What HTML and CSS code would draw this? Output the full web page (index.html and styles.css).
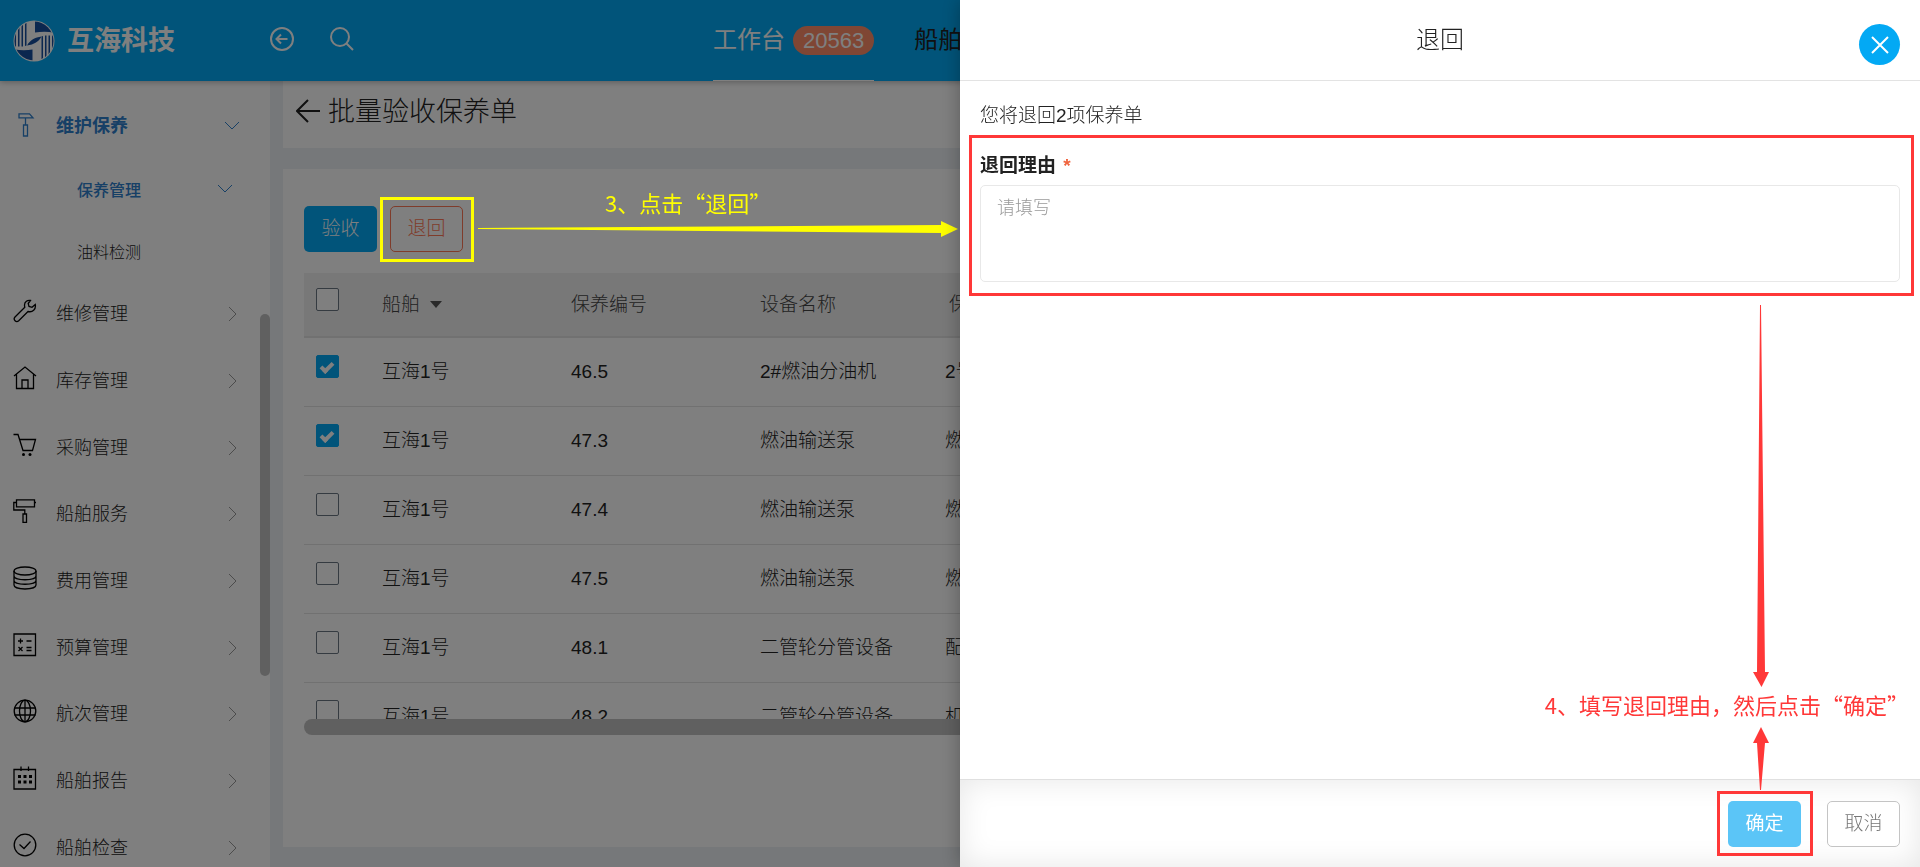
FILE: index.html
```html
<!DOCTYPE html>
<html lang="zh-CN">
<head>
<meta charset="utf-8">
<title>批量验收保养单</title>
<link rel="stylesheet" href="styles.css">
</head>
<body>
<div class="app">
  <header class="topbar">
    <a class="brand" href="#">
      <svg class="brand-logo" viewBox="0 0 42 42" aria-hidden="true">
        <defs><clipPath id="disc"><circle cx="21" cy="21" r="19.5"/></clipPath></defs>
        <circle cx="21" cy="21" r="20.5" fill="#fff"/>
        <g clip-path="url(#disc)">
          <path fill="#174f9f" d="M22 0h20v13C36 11.500 29 11.500 22 12.500z"/>
          <path fill="#174f9f" d="M0 29c7 1.500 13 1.500 19.500.5V42H0z"/>
          <path fill="#174f9f" d="M0 8l3-2v20.500H0zM5 8l1.500-2v20.500H5zM8.500 5l1.500-1v22.500H8.500zM12 3.500L13.500 2v23.500L12 26z"/>
          <path fill="#174f9f" d="M42 34l-3 2V15.500h3zM37 34l-1.500 2V15.500H37zM33.500 37l-1.500 1V15.500h1.500zM30 38.500L28.500 40V16.500l1.500-.5z"/>
          <path fill="#174f9f" d="M14 25.500C17 20 22 17.500 28.500 16.500C26 21.500 21 24.500 14 25.500z"/>
        </g>
      </svg>
      <span>互海科技</span>
    </a>
    <div class="tools">
      <button class="icon-btn" type="button" aria-label="返回">
        <svg width="24" height="24" viewBox="0 0 24 24"><circle cx="12" cy="12" r="11"/><path d="M17.500 12H7M11 7.500L6.500 12l4.500 4.500"/></svg>
      </button>
      <button class="icon-btn search" type="button" aria-label="搜索">
        <svg width="24" height="24" viewBox="0 0 24 24"><circle cx="10" cy="10" r="9"/><path d="M16.500 16.500L23 23"/></svg>
      </button>
    </div>
    <nav class="tabs">
      <a class="tab current" href="#">工作台 <span class="badge">20563</span></a>
      <a class="tab" href="#">船舶</a>
    </nav>
  </header>

  <div class="layout">
    <aside class="sidebar">
      <a class="menu-item open" href="#">
        <svg class="ic" viewBox="0 0 24 24"><path d="M6 .8h10.500l3.500 4h-4L14 4.800H6zM10.500 12h4v11h-4zM12.500 4.800V12"/></svg>
        <span>维护保养</span>
        <svg class="down" viewBox="0 0 16 9"><path d="M1 1l7 7 7-7"/></svg>
      </a>
      <a class="menu-item sub active" href="#">
        <span>保养管理</span>
        <svg class="down" viewBox="0 0 16 9"><path d="M1 1l7 7 7-7"/></svg>
      </a>
      <a class="menu-item sub" href="#"><span>油料检测</span></a>
      <div class="menu-list">
        <a class="menu-item" href="#">
          <svg class="ic" viewBox="0 0 24 24"><path d="M17.500 1.500c-3-.8-6 1.300-6 4.500 0 1.200.2 1.800.3 2.300L2 18c-2.300 2.600 1.200 6 3.700 3.700L15 12.500c4.500 1.200 8.200-2 7.300-7L19 8.300l-3-.8-.8-3z"/></svg>
          <span>维修管理</span><svg class="right" viewBox="0 0 9 16"><path d="M1 1l7 7-7 7"/></svg></a>
        <a class="menu-item" href="#">
          <svg class="ic" viewBox="0 0 24 24"><path d="M1 10L12 1l11 9M3.500 8.500V22.500h17V8.500M9 22.500v-8.500h6v8.500"/></svg>
          <span>库存管理</span><svg class="right" viewBox="0 0 9 16"><path d="M1 1l7 7-7 7"/></svg></a>
        <a class="menu-item" href="#">
          <svg class="ic" viewBox="0 0 24 24"><path d="M.5 1.500h4.500l5 16h10M6.500 6.500h16l-3 11"/><circle class="dot" cx="10.500" cy="21.500" r="1.500"/><circle class="dot" cx="17" cy="21.500" r="1.500"/></svg>
          <span>采购管理</span><svg class="right" viewBox="0 0 9 16"><path d="M1 1l7 7-7 7"/></svg></a>
        <a class="menu-item" href="#">
          <svg class="ic" viewBox="0 0 24 24"><path d="M3.500.8h18v7h-18zM3.500 3.500H.8V11h11v4M10 15h3.500v8.300H10zM21.500 3.500H23"/></svg>
          <span>船舶服务</span><svg class="right" viewBox="0 0 9 16"><path d="M1 1l7 7-7 7"/></svg></a>
        <a class="menu-item" href="#">
          <svg class="ic" viewBox="0 0 24 24"><ellipse cx="12" cy="5" rx="11" ry="4"/><path d="M1 5v14c0 5.300 22 5.300 22 0V5M1 10c0 5 22 5 22 0M1 14.500c0 5 22 5 22 0"/></svg>
          <span>费用管理</span><svg class="right" viewBox="0 0 9 16"><path d="M1 1l7 7-7 7"/></svg></a>
        <a class="menu-item" href="#">
          <svg class="ic" viewBox="0 0 24 24"><path d="M1 1h21.500v21.500H1zM5 8h5M7.500 5.500v5M13.500 8h5M5.500 14l4 4M9.500 14l-4 4M13.500 14.500h5M13.500 17.500h5"/></svg>
          <span>预算管理</span><svg class="right" viewBox="0 0 9 16"><path d="M1 1l7 7-7 7"/></svg></a>
        <a class="menu-item" href="#">
          <svg class="ic" viewBox="0 0 24 24"><circle cx="12" cy="12" r="10.800"/><ellipse cx="12" cy="12" rx="5.500" ry="10.800"/><path d="M12 1v22M1.500 9h21M1.500 16h21"/></svg>
          <span>航次管理</span><svg class="right" viewBox="0 0 9 16"><path d="M1 1l7 7-7 7"/></svg></a>
        <a class="menu-item" href="#">
          <svg class="ic" viewBox="0 0 24 24"><path d="M1 3.500h21.500V23H1zM8 .5V5M15.500.5V5"/><path class="dots" d="M5 10.500h3M10.500 10.500h3M16 10.500h3M5 16h3M10.500 16h3M16 16h3"/></svg>
          <span>船舶报告</span><svg class="right" viewBox="0 0 9 16"><path d="M1 1l7 7-7 7"/></svg></a>
        <a class="menu-item" href="#">
          <svg class="ic" viewBox="0 0 24 24"><circle cx="12" cy="12" r="10.800"/><path d="M6.500 11.500l4.500 4 6.500-7"/></svg>
          <span>船舶检查</span><svg class="right" viewBox="0 0 9 16"><path d="M1 1l7 7-7 7"/></svg></a>
      </div>
      <div class="side-scroll"></div>
    </aside>

    <main class="content">
      <div class="page-title">
        <svg width="24" height="24" viewBox="0 0 24 24"><path d="M24 12H1M12 1L1 12l11 11"/></svg>
        <h1>批量验收保养单</h1>
      </div>
      <section class="card">
        <div class="actions">
          <button class="btn primary" type="button">验收</button>
          <button class="btn warn" type="button">退回</button>
        </div>
        <div class="table-wrap">
          <table class="grid">
            <colgroup><col class="c-check"><col class="c"><col class="c"><col class="c"><col></colgroup>
            <thead><tr><th><input type="checkbox" aria-label="全选"></th><th>船舶 <i class="caret"></i></th><th>保养编号</th><th>设备名称</th><th>保</th></tr></thead>
            <tbody>
              <tr><td><input type="checkbox" aria-label="46.5" checked></td><td>互海1号</td><td>46.5</td><td>2#燃油分油机</td><td>2号</td></tr>
              <tr><td><input type="checkbox" aria-label="47.3" checked></td><td>互海1号</td><td>47.3</td><td>燃油输送泵</td><td>燃</td></tr>
              <tr><td><input type="checkbox" aria-label="47.4"></td><td>互海1号</td><td>47.4</td><td>燃油输送泵</td><td>燃</td></tr>
              <tr><td><input type="checkbox" aria-label="47.5"></td><td>互海1号</td><td>47.5</td><td>燃油输送泵</td><td>燃</td></tr>
              <tr><td><input type="checkbox" aria-label="48.1"></td><td>互海1号</td><td>48.1</td><td>二管轮分管设备</td><td>配</td></tr>
              <tr><td><input type="checkbox" aria-label="48.2"></td><td>互海1号</td><td>48.2</td><td>二管轮分管设备</td><td>机</td></tr>
            </tbody>
          </table>
          <div class="table-scroll"></div>
        </div>
      </section>
    </main>
  </div>
</div>

<div class="mask"></div>

<div class="note note-left">
  <div class="frame yellow frame-return"></div>
  <p class="note-text yellow note-return">3、点击“退回”</p>
  <svg class="arrow-right" width="480" height="16" viewBox="0 0 480 16" aria-hidden="true"><path fill="#ff0" d="M0 7L463 4V0L480 8L463 16V12L0 8z"/></svg>
</div>

<aside class="drawer" role="dialog" aria-labelledby="drawer-title">
  <header class="drawer-head">
    <h2 id="drawer-title">退回</h2>
    <button class="close" type="button" aria-label="关闭">
      <svg width="18" height="18" viewBox="0 0 18 18"><path d="M1 1l16 16M17 1L1 17"/></svg>
    </button>
  </header>
  <div class="drawer-body">
    <p class="summary">您将退回2项保养单</p>
    <div class="field">
      <label for="reason">退回理由 <span class="req">*</span></label>
      <textarea id="reason" placeholder="请填写"></textarea>
      <div class="frame red frame-field"></div>
    </div>
  </div>
  <footer class="drawer-foot">
    <div class="confirm">
      <button class="btn ok" type="button">确定</button>
      <div class="frame red frame-confirm"></div>
    </div>
    <button class="btn cancel" type="button">取消</button>
  </footer>
  <svg class="arrow-down" width="16" height="382" viewBox="0 0 16 382" aria-hidden="true"><path fill="#ff3838" d="M8 0L12 367H16L8.500 382L0 367H4L7 0z"/></svg>
  <p class="note-text red note-confirm">4、填写退回理由，然后点击“确定”</p>
  <svg class="arrow-up" width="16" height="63" viewBox="0 0 16 63" aria-hidden="true"><path fill="#ff3838" d="M8 0L16 16H12L8 63H7L4 16H0z"/></svg>
</aside>
</body>
</html>
```

FILE: styles.css
```css
* { box-sizing: border-box; }

body {
  margin: 0;
  height: 100vh;
  overflow: hidden;
  font-family: "Liberation Sans", "Noto Sans CJK SC", sans-serif;
  font-size: 19px;
  font-weight: 300;
  line-height: 28px;
  color: #222;
}

a { color: inherit; text-decoration: none; }
h1, h2, p { margin: 0; font-weight: 300; }
button { font: inherit; cursor: pointer; padding: 0; }
svg { flex: none; fill: none; stroke: currentColor; }

.app { height: 100vh; display: flex; flex-direction: column; background: #edf1f5; }

/* top bar */
.topbar {
  position: relative;
  z-index: 2;
  flex: none;
  height: 81px;
  display: flex;
  align-items: center;
  background: #03a9f4;
  color: #fff;
  box-shadow: 0 1px 6px rgba(0, 0, 0, .3);
}
.brand {
  width: 270px;
  padding-left: 13px;
  display: flex;
  align-items: center;
  gap: 12px;
  font-size: 27px;
  font-weight: 700;
}
.brand-logo { width: 42px; height: 42px; stroke: none; }
.tools { width: 443px; display: flex; gap: 36px; }
.icon-btn { display: flex; background: none; border: 0; color: #fff; }
.icon-btn svg { stroke-width: 2; }
.search { padding-bottom: 3px; }
.tabs { height: 100%; display: flex; gap: 40px; font-size: 24px; font-weight: 400; }
.tab { display: flex; align-items: center; gap: 8px; color: #222; border-bottom: 1px solid transparent; white-space: nowrap; }
.tab.current { color: #fff; border-color: #fff; }
.badge {
  padding: 0 10px;
  line-height: 29px;
  border-radius: 15px;
  background: #ff8c69;
  font-size: 22px;
}

/* sidebar */
.layout { flex: 1; min-height: 0; display: flex; }
.sidebar {
  position: relative;
  flex: none;
  width: 270px;
  overflow: hidden;
  padding-top: 13px;
  background: #fff;
  font-size: 18px;
}
.menu-item { display: flex; align-items: center; height: 56px; padding: 0 33px 0 13px; gap: 19px; }
.menu-item span { flex: 1; }
.menu-list { display: grid; grid-template-rows: repeat(9, 1fr); height: 600px; }
.menu-list .menu-item { height: auto; }
.ic { width: 24px; height: 24px; margin-bottom: 6px; stroke-width: 1.3; color: #000; }
.ic .dot { fill: #000; stroke: none; }
.ic .dots { stroke-width: 3; }
.right { width: 9px; height: 16px; color: #999; }
.down { width: 16px; height: 9px; }
.open { height: 63px; color: #2f80cd; font-weight: 700; padding-right: 30px; }
.open .ic { margin-bottom: 2px; color: #2f80cd; }
.sub { padding: 0 37px 0 77px; font-size: 16px; }
.active { height: 68px; color: #2f80cd; font-weight: 500; }
.active .down { margin-bottom: 6px; }
.side-scroll {
  position: absolute;
  right: 0;
  top: 233px;
  width: 10px;
  height: 362px;
  border-radius: 5px;
  background: #c1c1c1;
}

/* page content */
.content { flex: 1; min-width: 0; display: flex; flex-direction: column; gap: 21px; padding: 0 0 20px 13px; }
.page-title { flex: none; height: 67px; padding: 0 13px 5px; display: flex; align-items: center; gap: 8px; background: #fff; }
.page-title svg { stroke-width: 2; margin-bottom: 2px; }
.page-title h1 { font-size: 27px; }
.card { flex: 1; min-height: 0; display: flex; flex-direction: column; gap: 21px; padding: 37px 21px 112px; background: #fff; }
.actions { display: flex; gap: 13px; }
.btn { width: 73px; height: 46px; border-radius: 5px; border: 1px solid transparent; background: #fff; font-size: 19px; }
.primary { background: #03a9f4; color: #fff; }
.warn { color: #ff7856; border-color: #ff7856; }

.table-wrap { position: relative; flex: 1; min-height: 0; overflow: hidden; }
.grid { width: 100%; border-collapse: separate; border-spacing: 0; table-layout: fixed; }
.c-check { width: 66px; }
.c { width: 189px; }
.grid th, .grid td { padding: 0 12px; text-align: left; vertical-align: middle; font-weight: 300; white-space: nowrap; }
.grid th { height: 65px; background: #f0f0f0; color: #444; border-bottom: 2px solid #e2e2e2; }
.grid td { height: 69px; border-bottom: 1px solid #e2e2e2; }
.grid td:last-child { padding-left: 8px; }
.grid input {
  appearance: none;
  display: block;
  width: 23px;
  height: 23px;
  margin: 0 0 11px;
  border: 1px solid #6b7683;
  border-radius: 2px;
  background: #fff;
}
.grid input:checked { background: #03a9f4; border-color: #03a9f4; }
.grid input:checked::before {
  content: "";
  box-sizing: border-box;
  display: block;
  width: 8px;
  height: 13px;
  margin: 4px 6px;
  border: solid #fff;
  border-width: 0 4px 4px 0;
  transform: rotate(45deg);
}
.caret { display: inline-block; margin-left: 5px; vertical-align: 3px; border: 6px solid transparent; border-top: 7px solid #555; border-bottom: 0; }
.table-scroll { position: absolute; left: 0; right: 0; bottom: 0; height: 16px; border-radius: 8px; background: #c1c1c1; }

.mask { position: fixed; inset: 0; z-index: 5; background: rgba(0, 0, 0, .5); }

/* drawer */
.drawer {
  position: fixed;
  top: 0;
  right: 0;
  bottom: 0;
  z-index: 10;
  width: 50%;
  display: flex;
  flex-direction: column;
  background: #fff;
  box-shadow: 0 0 18px rgba(0, 0, 0, .3);
}
.drawer-head { position: relative; flex: none; height: 81px; display: flex; align-items: center; justify-content: center; border-bottom: 1px solid #e3e3e3; }
.drawer-head h2 { font-size: 24px; }
.close {
  position: absolute;
  right: 20px;
  top: 24px;
  width: 41px;
  height: 41px;
  display: flex;
  align-items: center;
  justify-content: center;
  border: 0;
  border-radius: 50%;
  background: #03a9f4;
  color: #fff;
}
.close svg { stroke-width: 2; }
.drawer-body { flex: 1; padding: 21px 20px; }
.field { position: relative; margin-top: 20px; display: flex; flex-direction: column; gap: 3px; }
.field label { line-height: 32px; font-weight: 700; }
.req { margin-left: 2px; color: #f0653f; }
.field textarea {
  width: 100%;
  height: 97px;
  padding: 8px 16px;
  border: 1px solid #e8e8e8;
  border-radius: 5px;
  resize: none;
  font: inherit;
  font-size: 18px;
}
.field textarea::placeholder { color: #999; }
.drawer-foot {
  flex: none;
  height: 88px;
  display: flex;
  align-items: center;
  justify-content: flex-end;
  gap: 26px;
  padding: 0 20px;
  border-top: 1px solid #e0e0e0;
  box-shadow: inset 0 0 30px rgba(0, 0, 0, .1);
}
.confirm { position: relative; display: flex; }
.ok { background: #5bc5f7; color: #fff; font-weight: 400; }
.cancel { border-color: #c4c4c4; color: #777; }

/* callouts */
.note { position: fixed; left: 0; top: 0; z-index: 6; }
.frame { position: absolute; border: 3px solid; pointer-events: none; }
.yellow { color: #ff0; }
.red { color: #ff3838; }
.frame-return { left: 380px; top: 197px; width: 94px; height: 65px; }
.frame-field { inset: -15px -14px -14px -11px; }
.frame-confirm { inset: -10px -12px -9px -11px; }
.note-text {
  position: absolute;
  font-family: "Noto Sans CJK SC", sans-serif;
  font-size: 22px;
  font-weight: 400;
  line-height: 32px;
  white-space: nowrap;
}
.note-return { left: 605px; top: 186px; }
.note-confirm { right: 11px; top: 688px; }
.note svg, .arrow-down, .arrow-up { position: absolute; stroke: none; }
.arrow-right { left: 478px; top: 221px; }
.arrow-down { right: 151px; top: 305px; }
.arrow-up { right: 151px; top: 727px; }
```
